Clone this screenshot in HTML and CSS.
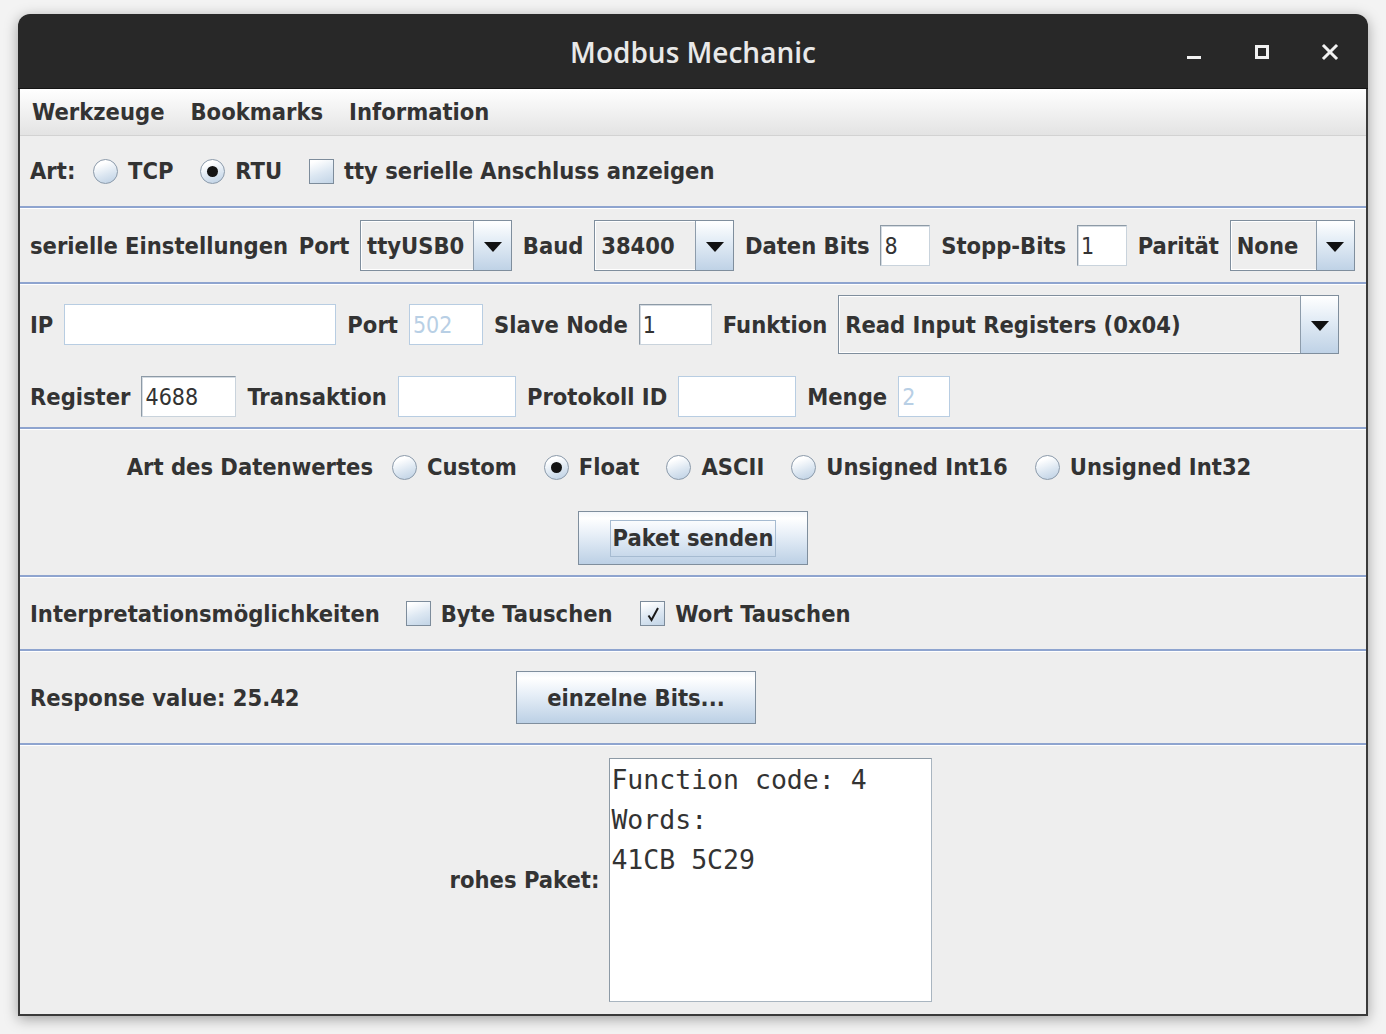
FILE: index.html
```html
<!DOCTYPE html>
<html lang="de">
<head>
<meta charset="utf-8">
<title>Modbus Mechanic</title>
<link rel="stylesheet" href="styles.css">
</head>
<body>
<div class="desktop">
  <div class="window">
    <div class="titlebar">
      <span class="title">Modbus Mechanic</span>
      <div class="controls">
        <span class="ctl"><svg width="18" height="18" viewBox="0 0 18 18"><rect x="2" y="13" width="14" height="3" fill="#f2f2f2"/></svg></span>
        <span class="ctl"><svg width="18" height="18" viewBox="0 0 18 18"><rect x="3.5" y="3.5" width="11" height="11" fill="none" stroke="#f2f2f2" stroke-width="3"/></svg></span>
        <span class="ctl"><svg width="18" height="18" viewBox="0 0 18 18"><path d="M3 3 L15 15 M15 3 L3 15" stroke="#f2f2f2" stroke-width="3" stroke-linecap="square"/></svg></span>
      </div>
    </div>
    <div class="frame">
      <div class="menubar">
        <span class="menu">Werkzeuge</span>
        <span class="menu">Bookmarks</span>
        <span class="menu">Information</span>
      </div>

      <section class="panel p1">
        <span class="lbl">Art:</span>
        <span class="opt first"><span class="radio"></span><span class="lbl">TCP</span></span>
        <span class="opt"><span class="radio on"></span><span class="lbl">RTU</span></span>
        <span class="opt"><span class="check"></span><span class="lbl">tty serielle Anschluss anzeigen</span></span>
      </section>

      <section class="panel p2">
        <span class="lbl">serielle Einstellungen</span>
        <span class="lbl">Port</span>
        <span class="combo w-port"><span class="val">ttyUSB0</span><span class="arrow"><svg width="18" height="10" viewBox="0 0 18 10"><path d="M0 0 H18 L9 10 Z" fill="#111"/></svg></span></span>
        <span class="lbl">Baud</span>
        <span class="combo w-baud"><span class="val">38400</span><span class="arrow"><svg width="18" height="10" viewBox="0 0 18 10"><path d="M0 0 H18 L9 10 Z" fill="#111"/></svg></span></span>
        <span class="lbl">Daten Bits</span>
        <span class="field w-small">8</span>
        <span class="lbl">Stopp-Bits</span>
        <span class="field w-small">1</span>
        <span class="lbl">Parität</span>
        <span class="combo w-par"><span class="val">None</span><span class="arrow"><svg width="18" height="10" viewBox="0 0 18 10"><path d="M0 0 H18 L9 10 Z" fill="#111"/></svg></span></span>
      </section>

      <section class="panel p3">
        <div class="row">
          <span class="lbl">IP</span>
          <span class="field light w-ip"></span>
          <span class="lbl">Port</span>
          <span class="field light disabled w-tport">502</span>
          <span class="lbl">Slave Node</span>
          <span class="field w-node">1</span>
          <span class="lbl">Funktion</span>
          <span class="combo tall w-func"><span class="val">Read Input Registers (0x04)</span><span class="arrow"><svg width="18" height="10" viewBox="0 0 18 10"><path d="M0 0 H18 L9 10 Z" fill="#111"/></svg></span></span>
        </div>
        <div class="row">
          <span class="lbl">Register</span>
          <span class="field w-reg">4688</span>
          <span class="lbl">Transaktion</span>
          <span class="field light w-trans"></span>
          <span class="lbl">Protokoll ID</span>
          <span class="field light w-trans"></span>
          <span class="lbl">Menge</span>
          <span class="field light disabled w-menge">2</span>
        </div>
      </section>

      <section class="panel p4">
        <div class="types">
          <span class="lbl">Art des Datenwertes</span>
          <span class="opt first"><span class="radio"></span><span class="lbl">Custom</span></span>
          <span class="opt"><span class="radio on"></span><span class="lbl">Float</span></span>
          <span class="opt"><span class="radio"></span><span class="lbl">ASCII</span></span>
          <span class="opt"><span class="radio"></span><span class="lbl">Unsigned Int16</span></span>
          <span class="opt"><span class="radio"></span><span class="lbl">Unsigned Int32</span></span>
        </div>
        <button class="btn send"><span class="focus">Paket senden</span></button>
      </section>

      <section class="panel p5">
        <span class="lbl">Interpretationsmöglichkeiten</span>
        <span class="opt first"><span class="check"></span><span class="lbl">Byte Tauschen</span></span>
        <span class="opt"><span class="check"><svg width="22" height="22" viewBox="0 0 22 22"><path d="M6.5 12.5 L9.5 17 L16 5" fill="none" stroke="#1a1a1a" stroke-width="2"/></svg></span><span class="lbl">Wort Tauschen</span></span>
      </section>

      <section class="panel p6">
        <span class="lbl">Response value: 25.42</span>
        <button class="btn bits">einzelne Bits...</button>
      </section>

      <section class="panel p7">
        <span class="lbl">rohes Paket:</span>
        <div class="textarea">Function code: 4
Words:
41CB 5C29</div>
      </section>
    </div>
  </div>
</div>
</body>
</html>
```
FILE: styles.css
```css
* { box-sizing: border-box; }

body {
  margin: 0;
  width: 1386px;
  height: 1034px;
  overflow: hidden;
  background: #f3f3f3;
  font-family: "DejaVu Sans", "Liberation Sans", sans-serif;
  font-stretch: condensed;
  color: #333333;
}

.desktop {
  padding: 14px 18px 0 18px;
}

.window {
  width: 1350px;
  height: 1002px;
  display: flex;
  flex-direction: column;
  border-radius: 12px 12px 0 0;
  overflow: hidden;
  background: #eeeeee;
  box-shadow: 0 3px 14px rgba(0, 0, 0, 0.35);
}

.titlebar {
  height: 75px;
  flex: none;
  background: #282828;
  border-bottom: 1px solid #151515;
  display: grid;
  grid-template-columns: 1fr auto 1fr;
  align-items: center;
  padding-top: 2px;
}

.title {
  grid-column: 2;
  color: #e9e9e9;
  font-family: "Open Sans", "DejaVu Sans", sans-serif;
  font-size: 28px;
  font-weight: 600;
  font-stretch: normal;
}

.controls {
  grid-column: 3;
  justify-self: end;
  display: flex;
  padding-right: 4px;
}

.ctl {
  width: 68px;
  height: 40px;
  display: flex;
  align-items: center;
  justify-content: center;
}

.frame {
  flex: 1;
  display: flex;
  flex-direction: column;
  border-left: 2px solid #3a3a3a;
  border-right: 2px solid #3a3a3a;
  border-bottom: 2px solid #3a3a3a;
}

.menubar {
  height: 47px;
  flex: none;
  display: flex;
  align-items: center;
  gap: 26px;
  padding-left: 12px;
  background: linear-gradient(#ffffff, #e3e3e3);
  border-bottom: 1px solid #d2d2d2;
}

.menu, .lbl {
  font-size: 23.5px;
  font-weight: bold;
  white-space: nowrap;
  color: #333333;
}

.panel {
  flex: none;
  display: flex;
  align-items: center;
  gap: 10.75px;
  padding-left: 10px;
  border-top: 1px solid #ffffff;
  border-bottom: 2px solid #8ea4cf;
}

.p1 { height: 72px; border-top: none; }
.p2 { height: 76px; }
.p3 { height: 145px; flex-direction: column; align-items: flex-start; justify-content: center; gap: 22px; }
.p4 { height: 148px; flex-direction: column; padding-left: 0; gap: 30px; justify-content: flex-start; padding-top: 23px; }
.p5 { height: 74px; }
.p6 { height: 94px; display: grid; grid-template-columns: 486px auto; gap: 0; }
.p7 { flex: 1; border-bottom: none; justify-content: center; gap: 10px; padding-left: 0; padding-right: 4px; }

.row {
  display: flex;
  align-items: center;
  gap: 11px;
}

.types {
  display: flex;
  align-items: center;
  margin-left: -8px;
}

.opt {
  display: flex;
  align-items: center;
  gap: 10px;
  margin-left: 16px;
  flex: none;
}
.opt.first { margin-left: 8px; }
.types .opt { margin-left: 27px; }
.types .opt.first { margin-left: 19px; }
.p1 .opt.first { margin-left: 7px; }
.p5 .opt { margin-left: 17px; }
.p5 .opt.first { margin-left: 15px; }

.radio {
  width: 25px;
  height: 25px;
  border-radius: 50%;
  border: 1px solid #8b9aaa;
  background: linear-gradient(160deg, #ffffff 20%, #dbe6f1 60%, #bccfe3 100%);
  display: flex;
  align-items: center;
  justify-content: center;
  flex: none;
}
.radio.on::after {
  content: "";
  width: 11px;
  height: 11px;
  border-radius: 50%;
  background: #141414;
}

.check {
  width: 25px;
  height: 25px;
  border: 1px solid #7d8c9b;
  background: linear-gradient(160deg, #ffffff 10%, #dce7f2 55%, #c2d4e6 100%);
  display: flex;
  align-items: center;
  justify-content: center;
  flex: none;
}

.field {
  height: 41px;
  background: #ffffff;
  border: 1px solid #8d9aa6;
  border-right-color: #c9d3dc;
  border-bottom-color: #c9d3dc;
  box-shadow: inset 1px 1px 0 #d4dbe2;
  font-size: 23px;
  font-weight: normal;
  color: #333333;
  padding-left: 3px;
  display: flex;
  align-items: center;
  flex: none;
}
.field.light {
  border: 1px solid #b8cde2;
  box-shadow: none;
}
.field.disabled { color: #b8cfe5; }

.w-small { width: 50px; }
.w-ip { width: 272px; }
.w-tport { width: 74px; }
.w-node { width: 73px; }
.w-reg { width: 95px; }
.w-trans { width: 118px; }
.w-menge { width: 52px; }

.combo {
  height: 51px;
  display: flex;
  border: 1px solid #7f8e9d;
  background: #eeeeee;
  flex: none;
}
.combo.tall { height: 59px; }
.combo .val {
  flex: 1;
  display: flex;
  align-items: center;
  padding-left: 5px;
  font-size: 23.5px;
  font-weight: bold;
  white-space: nowrap;
  border: 1px solid #ffffff;
  border-right: none;
  color: #333333;
}
.combo .arrow {
  width: 38px;
  border-left: 1px solid #8d9cab;
  background: linear-gradient(#ffffff 0%, #e4edf6 40%, #bfd2e6 100%);
  display: flex;
  align-items: center;
  justify-content: center;
  padding-top: 2px;
}
.w-port { width: 152px; }
.w-baud { width: 140px; }
.w-par { width: 125px; }
.w-func { width: 501px; }

.btn {
  font-family: inherit;
  font-stretch: condensed;
  font-size: 23.5px;
  font-weight: bold;
  color: #333333;
  border: 1px solid #7f8e9d;
  background: linear-gradient(#f4f7fb 0%, #ffffff 12%, #e6eef7 45%, #bcd0e5 100%);
  display: flex;
  align-items: center;
  justify-content: center;
  padding: 0;
  margin: 0;
}
.send {
  width: 230px;
  height: 54px;
}
.send .focus {
  border: 1px solid #a6bbd1;
  padding: 3px 2px 4px;
  line-height: 28px;
}
.bits {
  width: 240px;
  height: 53px;
}

.textarea {
  width: 323px;
  height: 244px;
  background: #ffffff;
  border: 1px solid #8d9aa6;
  border-right-color: #a9b5c0;
  border-bottom-color: #a9b5c0;
  white-space: pre;
  font-family: "DejaVu Sans Mono", "Liberation Mono", monospace;
  font-stretch: normal;
  font-size: 26.5px;
  line-height: 40px;
  color: #333333;
  padding: 1px 0 0 1px;
}
```
